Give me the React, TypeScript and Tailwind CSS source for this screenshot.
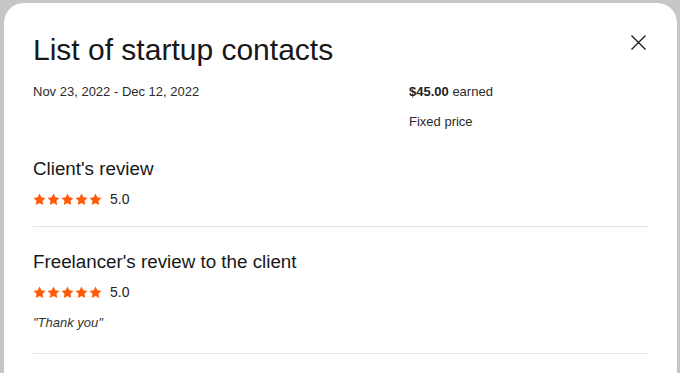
import React from "react";

function Star() {
  return (
    <svg width="13" height="13" viewBox="0 0 24 24" className="block">
      <polygon
        fill="#ff5a0a"
        points="12,1 15.4,8 23,9 17.5,14.3 18.9,22 12,18.3 5.1,22 6.5,14.3 1,9 8.6,8"
      />
    </svg>
  );
}

function Rating() {
  return (
    <div className="flex items-center h-[20px]">
      <div className="flex gap-[1px]">
        <Star />
        <Star />
        <Star />
        <Star />
        <Star />
      </div>
      <span className="ml-[8px] text-[14px] leading-[20px] text-[#222]">5.0</span>
    </div>
  );
}

export default function App() {
  return (
    <div
      className="h-[373px] w-[680px] overflow-hidden bg-[#c6c6c6] pt-[3px] pl-[4px] pr-[3px]"
      style={{ fontFamily: '"Liberation Sans", Arial, sans-serif' }}
    >
      <div className="h-[400px] rounded-t-[20px] bg-white px-[29px] pt-[29px] text-[#181818]">
        <div className="flex items-start justify-between">
          <h1 className="text-[30px] leading-[36px] font-normal tracking-[0px]">
            List of startup contacts
          </h1>
          <button className="mt-[3px] mr-[2px] flex h-[15px] w-[15px] items-center justify-center">
            <svg width="15" height="15" viewBox="0 0 15 15">
              <path d="M0.5 0.5 L14.5 14.5 M14.5 0.5 L0.5 14.5" stroke="#1d1d1d" strokeWidth="1.4" fill="none" />
            </svg>
          </button>
        </div>

        <div className="mt-[14px] grid grid-cols-[376px_1fr] text-[13px] leading-[20px] text-[#2b2b2b]">
          <div>Nov 23, 2022 - Dec 12, 2022</div>
          <div>
            <div>
              <span className="font-bold text-[#222]">$45.00</span> earned
            </div>
            <div className="mt-[10px]">Fixed price</div>
          </div>
        </div>

        <section className="mt-[23px]">
          <h2 className="text-[18.8px] leading-[28px] font-normal">Client's review</h2>
          <div className="mt-[6px]">
            <Rating />
          </div>
        </section>

        <div className="mt-[17px] h-px bg-[#dfe5ea]" />

        <section className="mt-[21px]">
          <h2 className="text-[18.8px] leading-[28px] font-normal">Freelancer's review to the client</h2>
          <div className="mt-[6px]">
            <Rating />
          </div>
          <p className="mt-[11px] text-[13px] leading-[20px] italic text-[#333]">"Thank you"</p>
        </section>

        <div className="mt-[20px] h-px bg-[#dfe5ea]" />
      </div>
    </div>
  );
}
